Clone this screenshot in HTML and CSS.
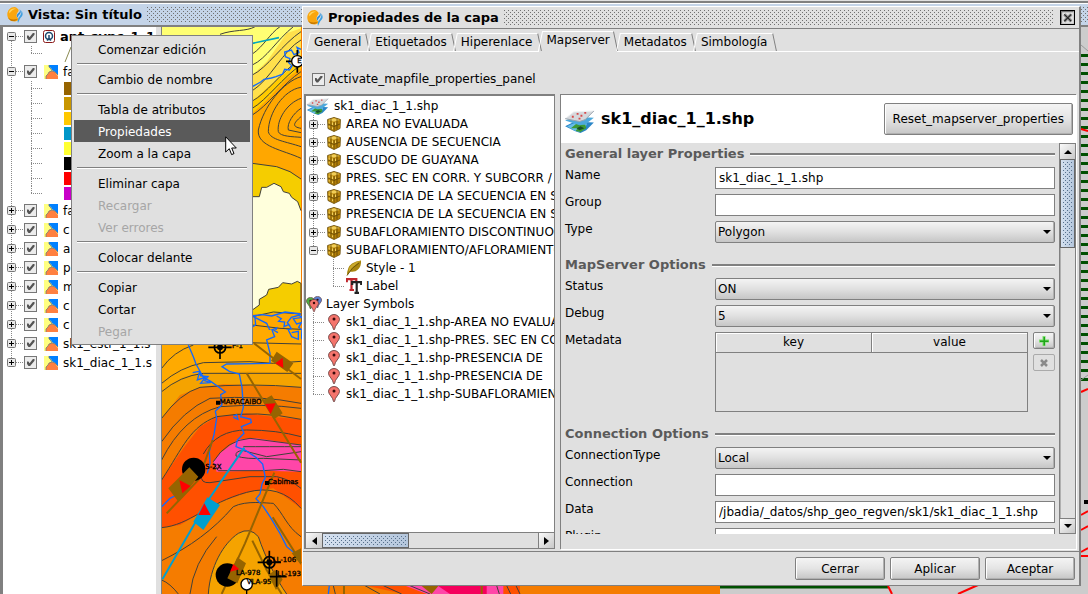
FILE: index.html
```
<!DOCTYPE html>
<html lang="es">
<head>
<meta charset="utf-8">
<title>Vista: Sin título</title>
<link rel="stylesheet" href="styles.css">
</head>
<body>
<svg class="defs" aria-hidden="true">
  <symbol id="logo" viewBox="0 0 16 16">
    <path d="M7.500 0C3.500 0 .3 3.500.300 7.500s3 7 7 7c2.500 0 4-1 4.500-2.500C9 10.500 9 7 11 5c.8-1 .8-2 .2-2.700C10.200 1 9 0 7.500 0z" fill="#f9a60f"/>
    <path d="M2 4.500C3.500 2 6 .8 9 1.800 6.500 2.300 4 4 2.500 6.500z" fill="#ffd35a"/>
    <path d="M1 10.500c2 2 5 2.500 9.500 1.500-2 3-7.500 3-9.500-1.500z" fill="#c77a00"/>
    <path d="M12.500 2c2 2 1.500 4 0 5.500S10.500 10 11.500 11C9 9.500 9.500 7.500 11.500 6s1.500-2.500 1-4z" fill="#2f8fd8"/>
    <path d="M14.500 3.500c2 3.500 1 5.500-.2 6.500s-2 3-3.300 6c-.8-2.500.2-5 1.500-6.500s2-3 2-6z" fill="#3f9fe0"/>
  </symbol>
  <symbol id="layer" viewBox="0 0 14 14">
    <path fill="#ffff80" d="M0 0h14v14H0z"/>
    <path fill="#0080ff" d="M5 0h9v10l-3-3-3-2-1-2-2-1z"/>
    <path fill="#ff8040" d="M2 14v-3l2-2 1-2 3-1 3 1 2 3 1 1v3z"/>
    <path fill="none" stroke="#777" stroke-width=".8" d="M5 0v2l2 2 1 2M11 7l3 3M2 14v-3l2-2 1-2 3-1 3 1"/>
  </symbol>
  <symbol id="plus" viewBox="0 0 9 9"><rect x=".5" y=".5" width="8" height="8" rx="1" fill="#e8e8e8" stroke="#777"/><path d="M2 4.500h5M4.500 2v5" stroke="#000"/></symbol>
  <symbol id="minus" viewBox="0 0 9 9"><rect x=".5" y=".5" width="8" height="8" rx="1" fill="#e8e8e8" stroke="#777"/><path d="M2 4.500h5" stroke="#000"/></symbol>
  <symbol id="stack" viewBox="0 0 32 24">
    <path d="M1 17l10-5 20 1-8 8-6 3-6-2z" fill="#2a86c8"/>
    <path d="M3 17l9-4 12 1-3 6-5 3-6-2z" fill="#67bde8"/>
    <path d="M7 19l6-5 9 1 1 4-6 4-5-1 2-3z" fill="#3d9a35"/>
    <path d="M13 19l4-2 4 2-5 2z" fill="#174f2c"/>
    <path d="M1 11l10-4 20 1-9 7-6 1z" fill="#4da9dc"/>
    <path d="M1 9l9-7 21-1-9 9-6 2z" fill="#d5d8dc"/>
    <path d="M1 9l9-7 21-1" fill="none" stroke="#eef0f2"/>
    <path d="M1 9l15 3 6-2 9-9" fill="none" stroke="#9aa4ad"/>
    <path d="M8 7h2M13 4h2M17 6h2M21 3h2M15 9h2" stroke="#d84a4a" stroke-width="2"/>
  </symbol>
  <symbol id="cube" viewBox="0 0 14 15">
    <path d="M.6 2.500L7 .5l6.400 2-.4 9L7 14.500l-6-3z" fill="#c9930f" stroke="#6a4d08" stroke-width=".9" stroke-linejoin="round"/>
    <path d="M1.200 3L7 1.200 12.800 3 7 4.800z" fill="#f0cd58"/>
    <path d="M7 5v9l5.500-2.700.4-8z" fill="#b17d08"/>
    <path d="M7 4.800V14M4 2.200v10.500M10 2.200v10.500M1 7l6 2.500L13 7" stroke="#6a4d08" fill="none" stroke-width=".9"/>
    <path d="M2.200 4.500v2M5.500 5.500v2.500M8.500 5.500V8M2.200 9v1.500M5.500 10.500V12" stroke="#f3d25f"/>
  </symbol>
  <symbol id="feather" viewBox="0 0 16 16">
    <path d="M1 15.500Q1 7 6 3.500 10 1 15 .5 15.500 6 12 9.500 9 12.500 4 11.500z" fill="#a8860f"/>
    <path d="M1 15.500Q4 8 15 .5 9 2 6 4.500 2 8 3 11.500" fill="#c9a92c"/>
    <path d="M1 15.500Q6 7 13 3" stroke="#6c550a" fill="none"/>
  </symbol>
  <symbol id="tt" viewBox="0 0 16 16">
    <path d="M.8 4.200V1.200h9.500v3M5.500 1.500v10M3.500 12h4.500" fill="none" stroke="#c0272d" stroke-width="2.200"/>
    <path d="M6.200 7V4.200h9V7M10.700 4.500v10M8.500 14.800h4.500" fill="none" stroke="#222" stroke-width="2.200"/>
  </symbol>
  <symbol id="pin" viewBox="0 0 12 16">
    <path d="M6 .5C9 .5 11.500 2.700 11.500 5.500 11.500 8.500 7 11 6.500 15.500h-1C5 11 .5 8.500.500 5.500.500 2.700 3 .5 6 .5z" fill="var(--pin, #f4746c)" stroke="#5b3535" stroke-width=".8"/>
    <circle cx="6" cy="5" r="1.500" fill="#3a0a0a"/>
  </symbol>
</svg>

<main class="view">
  <div class="desk-edge"></div>
  <header class="view-title">
    <svg class="logo"><use href="#logo"/></svg>
    <h1>Vista: Sin título</h1>
    <span class="grip"></span>
  </header>
  <div class="view-body">
    <ul class="toc" id="toc"></ul>
    <svg class="map" viewBox="162 27 926 567" preserveAspectRatio="xMinYMin slice" role="img" aria-label="Mapa">
      <rect x="162" y="27" width="926" height="567" fill="#f57c00"/>
      <g transform="scale(.33333)">
        <path d="M485 80H903V400H485z" fill="#ffff73"/>
        <path d="M903 85L860 100 800 185 757 225V600H903z" fill="#ffe04c"/>
        <path d="M903 165L860 215 800 265 757 305V600H903z" fill="#ffcb00"/>
        <path d="M903 205L860 235 800 300 757 340V600H903z" fill="#ffa700"/>
        <path d="M757 490L830 500 870 515 903 537V640H757z" fill="#f5cd00"/>
        <path d="M757 1020V590H778L785 562H800L822 550 843 560 850 575 868 580 875 592 893 605 903 632V1020z" fill="#ffffdc"/>
        <g fill="none" stroke="#40403a" stroke-width="3">
          <path d="M660 103C700 88 740 95 765 80M757 162C790 140 810 100 840 80M757 195C800 175 830 120 880 80M757 225C800 205 850 130 903 95M757 272C810 240 850 150 903 120M757 303C800 280 840 220 903 175M757 325C800 300 850 230 903 195M757 345C800 320 850 250 903 215"/>
          <path d="M903 230C850 245 790 320 775 390 770 440 850 450 903 475M903 262C850 270 805 340 805 395 810 420 860 425 903 440M903 295C860 310 830 360 835 395 840 410 880 410 903 412M903 325C880 340 860 370 865 390L903 398M903 350C880 370 875 380 903 385"/>
          <path d="M757 490L830 500 870 515 903 537M757 590h21l7-28h15l22-12 21 10 7 15 18 5 7 12 18 13 10 27"/>
        </g>
        <path d="M757 130L837 113" stroke="#00a6c0" stroke-width="5"/>
        <path d="M903 148l-12-6 6 16-15 6-8-14-20 6 2 14 14 6-4 12 10 10-8 12-14-2-6 14-20 8-14 4-22 4-10 8-25 14" fill="none" stroke="#1169ff" stroke-width="4"/>
        <circle cx="892" cy="184" r="17" fill="#fff" stroke="#000" stroke-width="4"/>
        <path d="M892 150v17M892 201v17M858 184h17" stroke="#000" stroke-width="5"/>
        <text x="892" y="188" class="well">E</text>
      </g>
      <g transform="translate(0 190) scale(.33333)">
        <path d="M757 360L778 345V328L800 315 806 298 835 292 848 278 875 282 892 274 903 280V400H757z" fill="#f5cd00" stroke="#40403a" stroke-width="3"/>
        <path d="M757 372L903 366V470H485V462H757z" fill="#ffa700"/>
        <path d="M757 380L820 366 903 372M757 405L840 415 903 418M757 450L903 460" fill="none" stroke="#40403a" stroke-width="3"/>
        <path d="M757 378l30-4 28 4 40-12 48 6M830 378l14 8-8 8 18 2-2 14 14-6 8 12-12 4 16 8 4 20 14-14 8 10 2-24-10-8 8-14-14 4-10-16 28-4-12-6-22 6-12 16 8 10M760 380l40 20 10 22 20-8-6 18-22 10 2 60 10 26M765 384l2 20-8 6" fill="none" stroke="#1169ff" stroke-width="4"/>
      </g>
      <g transform="translate(150 330) scale(.33333)">
        <path d="M35 0H453V280H35z" fill="#ffaa00"/>
        <path d="M35 185L100 140 160 130 300 124 453 130V280H35z" fill="#f5a300"/>
        <path d="M35 265L90 195 150 172 220 162 453 172V792H35z" fill="#f57c00"/>
        <path d="M35 450L100 355 150 290 200 260 290 250 380 262 453 268V535L370 475 300 485 200 520 90 585 35 593z" fill="#ff5000"/>
        <path d="M190 395L210 370 265 328 320 325 453 345V425L340 422 200 425z" fill="#ff46a8"/>
        <path d="M175 792C180 710 220 640 265 610Q300 590 325 620C345 680 380 750 410 792z" fill="#f5a300"/>
        <g fill="none" stroke="#40403a" stroke-width="3">
          <path d="M35 115Q70 65 130 45M290 38L453 42M35 160Q90 112 160 98L300 95 370 100 453 94M35 185Q90 138 160 130L453 130M35 265Q90 190 150 172 300 158 453 172"/>
          <path d="M35 335Q100 240 180 205 330 195 453 220M35 390Q100 260 210 230 340 220 453 235M35 450C100 350 120 290 200 260Q320 240 453 268M160 372Q200 300 290 300 380 300 453 320M190 395Q230 330 300 325L453 345M190 400L205 422 340 422 400 418 453 425M258 378Q255 362 280 362L350 380 453 365M258 378Q290 388 340 385L453 390M453 350Q350 350 280 350M155 435Q150 460 180 458L300 440 380 440Q420 448 453 475"/>
          <path d="M35 593C120 585 170 520 290 487Q390 460 453 535M35 692C120 650 190 600 250 530 290 510 350 520 370 520 400 550 410 590 453 620M120 792Q130 700 200 620M35 750Q60 760 85 792M175 792C180 710 220 640 265 610Q300 590 325 620C345 680 380 750 410 792"/>
        </g>
        <g fill="none" stroke="#1169ff" stroke-width="4">
          <path d="M115 45l15 35 8 22 10 18 12 22 22 12 20 14 24 18-14 8 4 30-20 20 4 20-8 50-14 50 2 36-8 30M128 128l20-4 4 14 22 2-10 12 18 6-30 2 14-18-24 8 6-22 14 12M35 530l25-25 30-15"/>
          <path d="M360 100L230 102l-14 8 22 14 30 8 8 40 4 60-8 28 30 8 2 10-30 12 8 20-20 20-4 20 30 12 30 20 20 20 8 40-10 20-6 30-12 14 22 24 20 30 30 50 20 40 30 24M360 100l0-30-10-40 24-10-8-20M370 0l14 8M415 0l10 20 20 8 0-24-20 4M250 258l10-4 4 14-14-6"/>
        </g>
        <g fill="#966400" stroke="#966400">
          <path d="M290 130L453 398M312 40L370 85 453 147M188 330L145 450 50 550M373 428L285 640 215 792M307 632L350 720 395 792M368 562L430 660 453 700" fill="none" stroke-width="6"/>
          <path d="M380 65L430 100 412 126 363 92zM340 210L365 196 398 250 372 268zM355 735L375 720 398 748 378 780zM425 670L453 655V705z" stroke="none"/>
        </g>
        <path d="M283 353L175 510 37 748" stroke="#009fd0" stroke-width="6" fill="none"/>
        <path d="M172 502L210 525 160 600 130 575z" fill="#009fd0"/>
        <circle cx="131" cy="418" r="35"/><circle cx="232" cy="735" r="35"/>
        <path d="M55 475L118 412 145 440 85 515zM262 682L288 700 262 760 232 745z" fill="#966400"/>
        <path d="M398 83L376 100 400 114zM345 222l32-2-15 32zM88 450L122 468 97 490zM163 520L182 555 145 555zM250 702L268 718 240 725z" fill="#f00"/>
        <g fill="none" stroke="#000" stroke-width="5"><circle cx="210" cy="52" r="17"/><path d="M175 52h70M210 35v52"/><circle cx="358" cy="697" r="17"/><path d="M323 697h70M358 662v70M380 720v50M360 740h50"/></g>
        <circle cx="210" cy="52" r="9"/><circle cx="358" cy="697" r="9"/>
        <circle cx="290" cy="763" r="17" fill="#fff" stroke="#000" stroke-width="4"/><path d="M290 780v12" stroke="#000" stroke-width="4"/>
        <path d="M198 212h12v12h-12zM345 453h12v12h-12z"/>
        <g class="well">
          <text x="246" y="53">P-1</text><text x="209" y="221">MARACAIBO</text><text x="166" y="418">S-2X</text>
          <text x="354" y="461">Cabimas</text><text x="368" y="695">LL-106</text><text x="382" y="737">LL-193</text>
          <text x="258" y="734">LA-978</text><text x="290" y="762">VLA-95</text>
        </g>
      </g>
      <g transform="translate(300 500) scale(.33333)">
        <path d="M190 255H660V282H310z" fill="#ff5000"/><path d="M310 255H610V282H380z" fill="#ff46a8"/><path d="M410 255H560V282H450z" fill="#f5005c"/>
        <path d="M365 258h50l-20 24z" fill="#966400"/>
        <path d="M195 257l45 25M250 257l55 25M330 257l60 25M590 257l8 25M620 257l12 25M648 257l12 25M100 257l6 25" stroke="#40403a" stroke-width="3"/>
        <path d="M132 257v25M545 257v25" stroke="#966400" stroke-width="6"/><path d="M88 257l-3 25" stroke="#1169ff" stroke-width="4"/>
      </g>
      <path d="M720 580H1088V594H720zM1078 27H1088V594H1078z" fill="#ccc"/>
      <path d="M720 587H888" stroke="#005000" stroke-width="3"/>
      <path d="M888 586l4 8M958 594l20-9M1081 515l7-4M1081 530l7-4M1081 552l7-4M1081 556h7M1081 392l7-3" stroke="#f00" stroke-width="2"/>
      <path d="M1085 54V382" stroke="#005000" stroke-width="10" stroke-dasharray="3 6"/>
      <path d="M1081 129l7 2" stroke="#f00" stroke-width="2"/>
      <path d="M1081 380l7-5M1081 45l7 6" stroke="#999" stroke-width="1"/>
      <path d="M1084 500h4v4h-4z"/>
    </svg>
  </div>
</main>

<nav class="menu" aria-label="Capa">
  <button>Comenzar edición</button><hr>
  <button>Cambio de nombre</button><hr>
  <button>Tabla de atributos</button>
  <button class="on">Propiedades</button>
  <button>Zoom a la capa</button><hr>
  <button>Eliminar capa</button>
  <button disabled>Recargar</button>
  <button disabled>Ver errores</button><hr>
  <button>Colocar delante</button><hr>
  <button>Copiar</button>
  <button>Cortar</button>
  <button disabled>Pegar</button>
</nav>
<svg class="pointer" viewBox="0 0 12 20" aria-hidden="true"><path d="M.7.800V16l3.600-3.300L6.600 18.600 9 17.600 6.700 12H11.300z" fill="#fff" stroke="#000"/></svg>

<section class="dialog" role="dialog" aria-labelledby="dlg">
  <header class="dialog-title">
    <svg class="logo"><use href="#logo"/></svg>
    <h2 id="dlg">Propiedades de la capa</h2>
    <span class="grip"></span>
    <button class="close" aria-label="Cerrar ventana"><svg viewBox="0 0 14 14"><path fill="#000" d="M0 0h14v14H0z"/><path fill="#e0e0e0" d="M1 1h12v12H1z"/><path d="M1.500 12.500v-11h11" fill="none" stroke="#777"/><path d="M4 4l6.500 6.500M10.500 4L4 10.500" stroke="#999" stroke-width="3"/><path d="M4 4l6.500 6.500M10.500 4L4 10.500" stroke="#222"/></svg></button>
  </header>
  <div class="tabs" role="tablist">
    <button role="tab">General</button><button role="tab">Etiquetados</button><button role="tab">Hiperenlace</button><button role="tab" class="on" aria-selected="true">Mapserver</button><button role="tab">Metadatos</button><button role="tab">Simbología</button><span class="tabs-rest"></span>
  </div>
  <label class="activate"><input type="checkbox" checked>Activate_mapfile_properties_panel</label>
  <div class="split">
    <div class="tree">
      <ul class="tree-list" id="tree"></ul>
      <div class="hbar">
        <button aria-label="Izquierda"><i class="tri left"></i></button><span class="thumb"></span><span class="track"></span><button aria-label="Derecha"><i class="tri right"></i></button>
      </div>
    </div>
    <div class="props">
      <header class="props-head">
        <svg class="stack-lg"><use href="#stack"/></svg>
        <h3>sk1_diac_1_1.shp</h3>
        <button class="btn reset">Reset_mapserver_properties</button>
      </header>
      <div class="props-scroll">
        <form class="form">
          <h4>General layer Properties</h4>
          <div class="fields">
            <label for="name">Name</label><input id="name" type="text" value="sk1_diac_1_1.shp">
            <label for="group">Group</label><input id="group" type="text">
            <label for="type">Type</label><div class="pick"><select id="type"><option>Polygon</option></select></div>
          </div>
          <h4>MapServer Options</h4>
          <div class="fields">
            <label for="status">Status</label><div class="pick"><select id="status"><option>ON</option></select></div>
            <label for="debug">Debug</label><div class="pick"><select id="debug"><option>5</option></select></div>
            <span>Metadata</span>
            <div class="meta">
              <div class="meta-box"><table><thead><tr><th>key</th><th>value</th></tr></thead></table></div>
              <div class="meta-tools">
                <button type="button" class="btn" aria-label="Añadir"><svg viewBox="0 0 10 10"><path d="M3.500 0h3v3.500H10v3H6.500V10h-3V6.500H0v-3h3.500z" fill="#7fe06e"/><path d="M4.500 1h1.500v3.500h3.500V6H6v3.500H4.500V6H1V4.500h3.500z" fill="#1fa51a"/></svg></button>
                <button type="button" class="btn" disabled aria-label="Quitar"><svg viewBox="0 0 10 10"><path d="M2 2l6 6M8 2L2 8" stroke="#8a8a8a" stroke-width="2.500"/></svg></button>
              </div>
            </div>
          </div>
          <h4>Connection Options</h4>
          <div class="fields">
            <label for="ctype">ConnectionType</label><div class="pick"><select id="ctype"><option>Local</option></select></div>
            <label for="conn">Connection</label><input id="conn" type="text">
            <label for="data">Data</label><input id="data" type="text" value="/jbadia/_datos/shp_geo_regven/sk1/sk1_diac_1_1.shp">
            <label for="plugin">Plugin</label><input id="plugin" type="text">
          </div>
        </form>
        <div class="vbar">
          <button aria-label="Arriba"><i class="tri up"></i></button><span class="thumb"></span><span class="track"></span><button aria-label="Abajo"><i class="tri down"></i></button>
        </div>
      </div>
    </div>
  </div>
  <footer class="dialog-foot"><button class="btn">Cerrar</button><button class="btn">Aplicar</button><button class="btn">Aceptar</button></footer>
</section>
<script src="app.js"></script>
</body>
</html>
```
FILE: styles.css
```
* { box-sizing: border-box; }
body { margin: 0; height: 100vh; overflow: hidden; position: relative; background: #e0e0e0; color: #000; font: 12px/16px "DejaVu Sans", sans-serif; }
h1, h2, h3, h4, ul { margin: 0; padding: 0; }
h1, h2, h3, h4, .toc b { font-size: 13px; }
ul { list-style: none; }
button, input, select { font: inherit; color: inherit; margin: 0; padding: 0; }
button { border: 0; background: none; }
.defs { position: absolute; width: 0; height: 0; }
.logo { width: 16px; height: 16px; flex: none; }
.grip { flex: 1; height: 16px; --d: conic-gradient(from 270deg at 1px 1px, #707070 90deg, transparent 0); background: var(--d) 0 0 / 4px 4px, var(--d) 2px 2px / 4px 4px; }

.view { height: 100%; display: flex; flex-direction: column; }
.desk-edge { height: 4px; background: #808080; border-top: 1px solid #e0e0e0; border-bottom: 1px solid #fff; flex: none; }
.view-title { height: 23px; flex: none; display: flex; align-items: center; gap: 5px; padding-left: 7px; background: #c4d4e8; border-bottom: 2px solid #808080; }
.view-body { flex: 1; min-height: 0; display: flex; border-left: 3px solid #808080; background: #e0e0e0; }
.toc { --dot: repeating-linear-gradient(180deg, #888 0 1px, transparent 1px 2px); width: 153px; flex: none; overflow: hidden; background: var(--dot) 8px 10px / 1px 325px no-repeat, #fff; }
.toc li { height: 19px; display: flex; align-items: center; padding-left: 4px; white-space: nowrap; background: repeating-linear-gradient(90deg, #888 0 1px, transparent 1px 2px) 13px 9px / 8px 1px no-repeat; }
.toc .layer { width: 14px; height: 14px; margin: 0 5px 0 7px; flex: none; }
.toc .point { margin: 0 5px 0 6px; width: 12px; height: 13px; flex: none; }
.toc li.legend { height: 15px; padding-left: 61px; background: var(--dot) 28px 0 / 1px 100% no-repeat, repeating-linear-gradient(90deg, #888 0 1px, transparent 1px 2px) 28px 7px / 12px 1px no-repeat; }
.toc li.legend.last { background-size: 1px 8px, 12px 1px; }
.toc li.legend.line { height: 16px; }
.swatch { width: 20px; height: 13px; }
.twist { width: 9px; height: 9px; display: flex; flex: none; }
.twist svg { width: 9px; height: 9px; }
.toc input { margin-left: 8px; }
input[type=checkbox] { appearance: none; width: 13px; height: 13px; flex: none; border: 1px solid #777; background: #ececec; display: grid; place-items: center; }
input[type=checkbox]::before { content: ""; width: 8px; height: 7px; background: #555; clip-path: polygon(0 35%, 25% 35%, 38% 60%, 80% 0, 100% 0, 100% 25%, 45% 100%, 25% 100%, 0 60%); }
.map { flex: 1; min-width: 0; height: 100%; margin-left: 5px; border-left: 1px solid #808080; }
.well { font: 21px "DejaVu Sans", sans-serif; stroke: #000; }

.menu { position: absolute; left: 71px; top: 35px; width: 182px; padding: 2px; background: #e0e0e0; border: 1px solid #808080; }
.menu button { display: block; width: 100%; height: 22px; padding: 1px 0 0 24px; text-align: left; }
.menu .on { background: #5a5a5a; color: #fff; }
.menu button:disabled { color: #a6a6a6; }
.menu hr { margin: 3px 3px; height: 2px; border: 0; background: #808080; border-bottom: 1px solid #fff; }
.pointer { position: absolute; left: 225px; top: 136px; width: 12px; height: 20px; }

.dialog { position: absolute; left: 302px; right: 7px; top: 6px; bottom: 8px; display: flex; flex-direction: column; background: #e0e0e0; border: 1px solid #fff; border-right: 2px solid #808080; border-bottom-color: #808080; }
.dialog-title { height: 22px; flex: none; display: flex; align-items: center; gap: 5px; padding: 0 4px; border-bottom: 1px solid #808080; }
.dialog-title .close { width: 15px; height: 15px; margin-left: 2px; }
.close svg { display: block; width: 15px; height: 15px; }
.tabs { height: 23px; flex: none; display: flex; align-items: flex-end; padding-left: 4px; }
.tabs button { position: relative; height: 19px; padding: 0 7px; border-bottom: 1px solid #fff; }
.tabs button::before { content: ""; position: absolute; inset: 0 3px 0 1px; border-top: 1px solid #fff; border-left: 1px solid #fff; transform: skewX(-12deg); transform-origin: 0 50%; width: 8px; }
.tabs button::after { content: ""; position: absolute; top: 0; bottom: 0; left: 6px; right: 0; border-top: 1px solid #fff; border-right: 1px solid #808080; transform: skewX(12deg); transform-origin: 100% 50%; }
.tabs .on { height: 21px; padding-bottom: 2px; border-bottom-color: transparent; }
.tabs-rest { flex: 1; height: 1px; background: #fff; }
.activate { display: flex; align-items: center; gap: 4px; padding: 19px 9px 7px; flex: none; }
.split { flex: 1; min-height: 0; display: grid; grid-template-columns: 251px minmax(0, 1fr); grid-template-rows: minmax(0, 1fr); gap: 5px; padding: 0 3px 2px 1px; }
.tree { display: flex; flex-direction: column; background: #fff; border: solid #808080; border-width: 2px 1px 1px 2px; min-width: 0; }
.tree-list { flex: 1; min-height: 0; overflow: hidden; padding-top: 1px; }
.tree-list li { height: 18px; display: flex; align-items: center; white-space: nowrap; }
.tree-list .stack-sm { width: 23px; height: 17px; margin-right: 5px; flex: none; }
.tree-list li { --v: repeating-linear-gradient(180deg, #888 0 1px, transparent 1px 2px); --h: repeating-linear-gradient(90deg, #888 0 1px, transparent 1px 2px); }
.node { padding-left: 3px; background: var(--v) 7px 0 / 1px 100% no-repeat, var(--h) 12px 9px / 8px 1px no-repeat; }
.node.end { background-size: 1px 9px, 8px 1px; }
.node .cube { width: 14px; height: 15px; margin: 0 5px 0 9px; flex: none; }
.leaf { padding-left: 40px; background: var(--v) 27px 0 / 1px 100% no-repeat, var(--h) 27px 9px / 12px 1px no-repeat; }
.leaf.end { background-size: 1px 10px, 12px 1px; }
.leaf svg { width: 16px; height: 16px; margin-right: 4px; flex: none; }
.group .pins { width: 16px; height: 16px; margin-right: 4px; flex: none; }
.sym { padding-left: 22px; background: var(--v) 7px 0 / 1px 100% no-repeat, var(--h) 7px 9px / 12px 1px no-repeat; }
.sym.end { background-size: 1px 10px, 12px 1px; }
.sym svg { width: 12px; height: 16px; margin-right: 6px; flex: none; }

.hbar { height: 16px; flex: none; display: flex; border-top: 1px solid #808080; background: #e0e0e0; }
.hbar button, .vbar button { display: grid; place-items: center; background: linear-gradient(135deg, #fafafa, #c8c8c8); flex: none; }
.hbar button { width: 16px; }
.hbar button:last-child { border-left: 1px solid #808080; }
.thumb { --d: conic-gradient(from 270deg at 1px 1px, #56708c 90deg, transparent 0); border: 1px solid #666; background: var(--d) 2px 2px / 4px 4px content-box, var(--d) 4px 4px / 4px 4px content-box, linear-gradient(90deg, #d5e1f0, #b4c6dc); background-clip: content-box, content-box, border-box; padding: 2px; }
.hbar .thumb { flex: 0 0 87px; }
.track { flex: 1; }
.tri { width: 0; height: 0; border: 4px solid transparent; }
.left { border-width: 4px 5px 4px 0; border-right-color: #000; }
.right { border-width: 4px 0 4px 5px; border-left-color: #000; }
.up { border-width: 0 4px 4px; border-bottom-color: #000; }
.down { border-width: 4px 4px 0; border-top-color: #000; }

.props { display: flex; flex-direction: column; min-width: 0; padding-bottom: 15px; border: solid #808080; border-width: 1px 0 0 1px; box-shadow: 1px 1px #fff; }
.props-head { flex: none; height: 48px; display: flex; align-items: center; gap: 6px; padding: 0 3px; background: #fff; }
.props-head h3 { flex: 1; font-size: 16px; line-height: 20px; }
.stack-lg { width: 31px; height: 23px; margin-top: 4px; flex: none; }
.btn { border: 1px solid #808080; border-radius: 2px; background: linear-gradient(#f4f4f4, #e4e4e4 50%, #c6c6c6); box-shadow: inset 1px 0 #fff, inset -1px -1px #b0b0b0; }
.reset { height: 32px; padding: 0 8px; }
.props-scroll { flex: 1; min-height: 0; display: flex; }
.form { flex: 1; min-width: 0; overflow: hidden; padding: 0 4px; }
.form h4 { display: flex; align-items: center; gap: 6px; line-height: 22px; color: #5a5a5a; margin: 11px 0 2px; }
.form h4:first-child { margin-top: 0; }
.form h4::after { content: ""; flex: 1; height: 2px; background: #808080; border-bottom: 1px solid #fff; }
.fields { display: grid; grid-template-columns: 150px minmax(0, 1fr); gap: 5px 0; }
.fields input, .fields select { display: block; width: 100%; height: 22px; border: 1px solid #808080; padding: 0 3px; border-radius: 0; }
.fields input { background: #fff; }
.pick { position: relative; }
.fields .pick select { appearance: none; border-radius: 2px; background: linear-gradient(#f4f4f4, #e0e0e0 50%, #c6c6c6); box-shadow: inset -1px 0 #b0b0b0; padding: 0 2px; }
.pick::after { content: ""; position: absolute; right: 4px; top: 9px; border: 4px solid transparent; border-top-color: #000; border-bottom: 0; pointer-events: none; }
.meta { display: flex; gap: 5px; }
.meta-box { flex: 1; height: 80px; border: 1px solid #808080; }
.meta table { width: 100%; table-layout: fixed; border-collapse: collapse; }
.meta th { height: 19px; padding: 0; font-weight: normal; border-bottom: 1px solid #808080; box-shadow: inset 1px 1px #fff; }
.meta th + th { border-left: 1px solid #808080; }
.meta-tools { display: flex; flex-direction: column; gap: 5px; }
.meta-tools .btn { width: 22px; height: 17px; display: grid; place-items: center; }
.meta-tools .btn:disabled { border-color: #aaa; background: #e0e0e0; box-shadow: none; }
.meta-tools svg { width: 10px; height: 10px; }
.vbar { width: 17px; flex: none; display: flex; flex-direction: column; border: 1px solid #808080; }
.vbar button { height: 15px; }
.vbar button:last-child { border-top: 1px solid #808080; }
.vbar .thumb { flex: 0 0 89px; }
.vbar .track { border-left: 1px solid #b0b0b0; }
.dialog-foot { flex: none; display: flex; justify-content: flex-end; gap: 5px; padding: 5px 4px; border-top: 1px solid #808080; }
.dialog-foot .btn { width: 90px; height: 23px; }
```
FILE: app.js
```
const svg = (id, cls) => `<svg class="${cls}"><use href="#${id}"/></svg>`;
const twist = (open) => `<button class="twist" aria-label="${open ? "Contraer" : "Expandir"}">${svg(open ? "minus" : "plus", "")}</button>`;

const pointIcon = '<svg class="point" viewBox="0 0 12 13"><rect x=".5" y=".5" width="11" height="12" rx="2" fill="#fff" stroke="#8b1a1a"/><circle cx="6" cy="6" r="3.500" fill="none" stroke="#1c4a6e" stroke-width="1.500"/><path d="M6 5v4M4 10.500l2-2 2 2" fill="none" stroke="#1c4a6e" stroke-width="1.500"/></svg>';
const tocRow = (name, open, icon = svg("layer", "layer"), tag = "span") =>
  `<li>${twist(open)}<input type="checkbox" checked aria-label="${name}">${icon}<${tag}>${name}</${tag}></li>`;
const colors = ["#966400", "#c89600", "#ffc800", "#0096c8", "#ffff32", "#000000", "#ff0000", "#c800c8"];

document.getElementById("toc").innerHTML =
  tocRow("ant_sync_1_1", true, pointIcon, "b") +
  '<li class="legend line last"><svg width="7" height="16"><path d="M1 16L7 1" stroke="#8a8a50"/></svg></li>' +
  tocRow("fa", true) +
  colors.map((c, i) => `<li class="legend${i === colors.length - 1 ? " last" : ""}"><span class="swatch" style="background:${c}"></span></li>`).join("") +
  ["fa", "c", "a", "p", "m", "c", "c", "sk1_estr_1_1.s", "sk1_diac_1_1.s"].map((n) => tocRow(n, false)).join("");

const classes = ["AREA NO EVALUADA", "AUSENCIA DE SECUENCIA", "ESCUDO DE GUAYANA", "PRES. SEC EN CORR. Y SUBCORR /",
  "PRESENCIA DE LA SECUENCIA EN S", "PRESENCIA DE LA SECUENCIA EN S", "SUBAFLORAMIENTO DISCONTINUO", "SUBAFLORAMIENTO/AFLORAMIENTO"];
const symbols = ["AREA NO EVALUADA", "PRES. SEC EN CORR.", "PRESENCIA DE", "PRESENCIA DE", "SUBAFLORAMIENTO"];
const pins = '<svg class="pins" viewBox="0 0 16 16"><use href="#pin" x="0" y="1" width="9" height="12" style="--pin:#4fae42"/><use href="#pin" x="7" y="0" width="9" height="12" style="--pin:#5b7fd0"/><use href="#pin" x="3" y="3" width="10" height="13"/></svg>';

document.getElementById("tree").innerHTML =
  `<li>${svg("stack", "stack-sm")}sk1_diac_1_1.shp</li>` +
  classes.map((n, i) => `<li class="node${i === classes.length - 1 ? " end" : ""}">${twist(i === classes.length - 1)}${svg("cube", "cube")}${n}</li>`).join("") +
  `<li class="leaf">${svg("feather", "")}Style - 1</li><li class="leaf end">${svg("tt", "")}Label</li>` +
  `<li class="group">${pins}Layer Symbols</li>` +
  symbols.map((n, i) => `<li class="sym${i === symbols.length - 1 ? " end" : ""}">${svg("pin", "")}sk1_diac_1_1.shp-${n}</li>`).join("");
```
